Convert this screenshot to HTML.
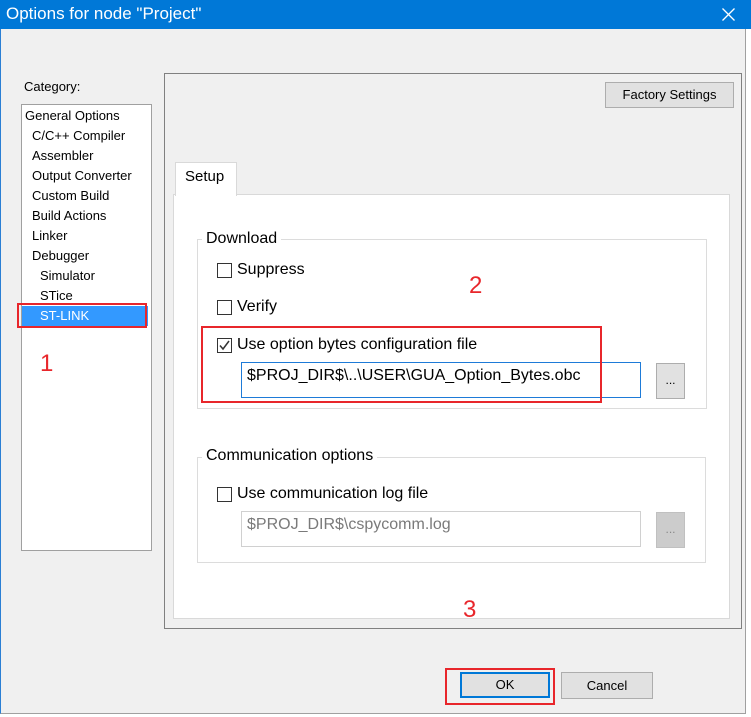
<!DOCTYPE html>
<html><head><meta charset="utf-8"><style>
*{box-sizing:border-box;margin:0;padding:0}
body{width:751px;height:717px;background:#fff;position:relative;overflow:hidden;font-family:"Liberation Sans","Noto Sans CJK SC",sans-serif;font-size:16px;color:#000}
.a{position:absolute}
.win{left:0;top:0;width:746px;height:714px;background:#f0f0f0;border-left:1px solid #2a7fd4;border-bottom:1px solid #a0a0a0;border-right:1px solid #a0a0a0}
.title{left:0;top:0;width:751px;height:29px;background:#0078d7;color:#fff;font-size:17px;line-height:27px;padding-left:6px}
.btn{background:#e1e1e1;border:1px solid #adadad;text-align:center;font-size:13px}
.cb{width:15px;height:15px;border:1px solid #333;background:#fff}
.it{left:0;font-size:13px;line-height:20px;white-space:nowrap}
.red{border:2px solid #e8262b}
.num{color:#e8262b;font-size:24px}
.l{white-space:nowrap}
</style></head><body>
<div class="a win"></div>
<div class="a title">Options for node "Project"<svg class="a" style="left:722px;top:8px" width="13" height="13"><path d="M0.5 0.5 L12.5 12.5 M12.5 0.5 L0.5 12.5" stroke="#fff" stroke-width="1.3"/></svg></div>

<div class="a" style="left:24px;top:79px;font-size:13px">Category:</div>
<div class="a" style="left:21px;top:104px;width:131px;height:447px;background:#fff;border:1px solid #a0a0a0"></div>
<div class="a" style="left:22px;top:306px;width:126px;height:20px;background:#3399ff"></div>
<div class="a" style="left:25px;top:106px;width:125px">
<div class="a it" style="top:0">General Options</div>
<div class="a it" style="top:20px;left:7px">C/C++ Compiler</div>
<div class="a it" style="top:40px;left:7px">Assembler</div>
<div class="a it" style="top:60px;left:7px">Output Converter</div>
<div class="a it" style="top:80px;left:7px">Custom Build</div>
<div class="a it" style="top:100px;left:7px">Build Actions</div>
<div class="a it" style="top:120px;left:7px">Linker</div>
<div class="a it" style="top:140px;left:7px">Debugger</div>
<div class="a it" style="top:160px;left:15px">Simulator</div>
<div class="a it" style="top:180px;left:15px">STice</div>
<div class="a it" style="top:200px;left:15px;color:#fff">ST-LINK</div>
</div>
<div class="a red" style="left:17px;top:303px;width:130px;height:25px"></div>
<div class="a num" style="left:40px;top:350px">1</div>

<div class="a" style="left:164px;top:73px;width:578px;height:556px;border:1px solid #808080"></div>
<div class="a btn" style="left:605px;top:82px;width:129px;height:26px;line-height:24px">Factory Settings</div>

<div class="a" style="left:173px;top:194px;width:557px;height:425px;background:#fff;border:1px solid #d9d9d9"></div>
<div class="a" style="left:175px;top:162px;width:62px;height:34px;background:#fff;border:1px solid #d9d9d9;border-bottom:none;font-size:15px;padding:5px 0 0 9px">Setup</div>

<div class="a" style="left:197px;top:239px;width:510px;height:170px;border:1px solid #dcdcdc"></div>
<div class="a l" style="left:202px;top:230px;background:#fff;padding:0 4px">Download</div>
<div class="a cb" style="left:217px;top:263px"></div><div class="a l" style="left:237px;top:261px">Suppress</div>
<div class="a cb" style="left:217px;top:300px"></div><div class="a l" style="left:237px;top:298px">Verify</div>
<div class="a cb" style="left:217px;top:338px"><svg width="13" height="13" style="position:absolute;left:0;top:0"><path d="M2 6.5 L5 10 L11 2" stroke="#333" stroke-width="1.5" fill="none"/></svg></div>
<div class="a l" style="left:237px;top:336px">Use option bytes configuration file</div>
<div class="a l" style="left:241px;top:362px;width:400px;height:36px;border:1px solid #1e7bd8;background:#fff;padding:4px 0 0 5px">$PROJ_DIR$\..\USER\GUA_Option_Bytes.obc</div>
<div class="a btn" style="left:656px;top:363px;width:29px;height:36px;line-height:32px;font-size:12px">...</div>
<div class="a red" style="left:201px;top:326px;width:401px;height:77px"></div>
<div class="a num" style="left:469px;top:272px">2</div>

<div class="a" style="left:197px;top:457px;width:509px;height:106px;border:1px solid #dcdcdc"></div>
<div class="a l" style="left:202px;top:447px;background:#fff;padding:0 4px">Communication options</div>
<div class="a cb" style="left:217px;top:487px"></div><div class="a l" style="left:237px;top:485px">Use communication log file</div>
<div class="a l" style="left:241px;top:511px;width:400px;height:36px;border:1px solid #d0d0d0;background:#fff;color:#7a7a7a;padding:4px 0 0 5px">$PROJ_DIR$\cspycomm.log</div>
<div class="a" style="left:656px;top:512px;width:29px;height:36px;background:#cccccc;border:1px solid #c0c0c0;color:#888;text-align:center;line-height:32px;font-size:12px">...</div>
<div class="a num" style="left:463px;top:596px">3</div>

<div class="a btn" style="left:460px;top:672px;width:90px;height:26px;line-height:22px;border:2px solid #0078d7">OK</div>
<div class="a btn" style="left:561px;top:672px;width:92px;height:27px;line-height:25px">Cancel</div>
<div class="a red" style="left:445px;top:668px;width:110px;height:37px"></div>
</body></html>
